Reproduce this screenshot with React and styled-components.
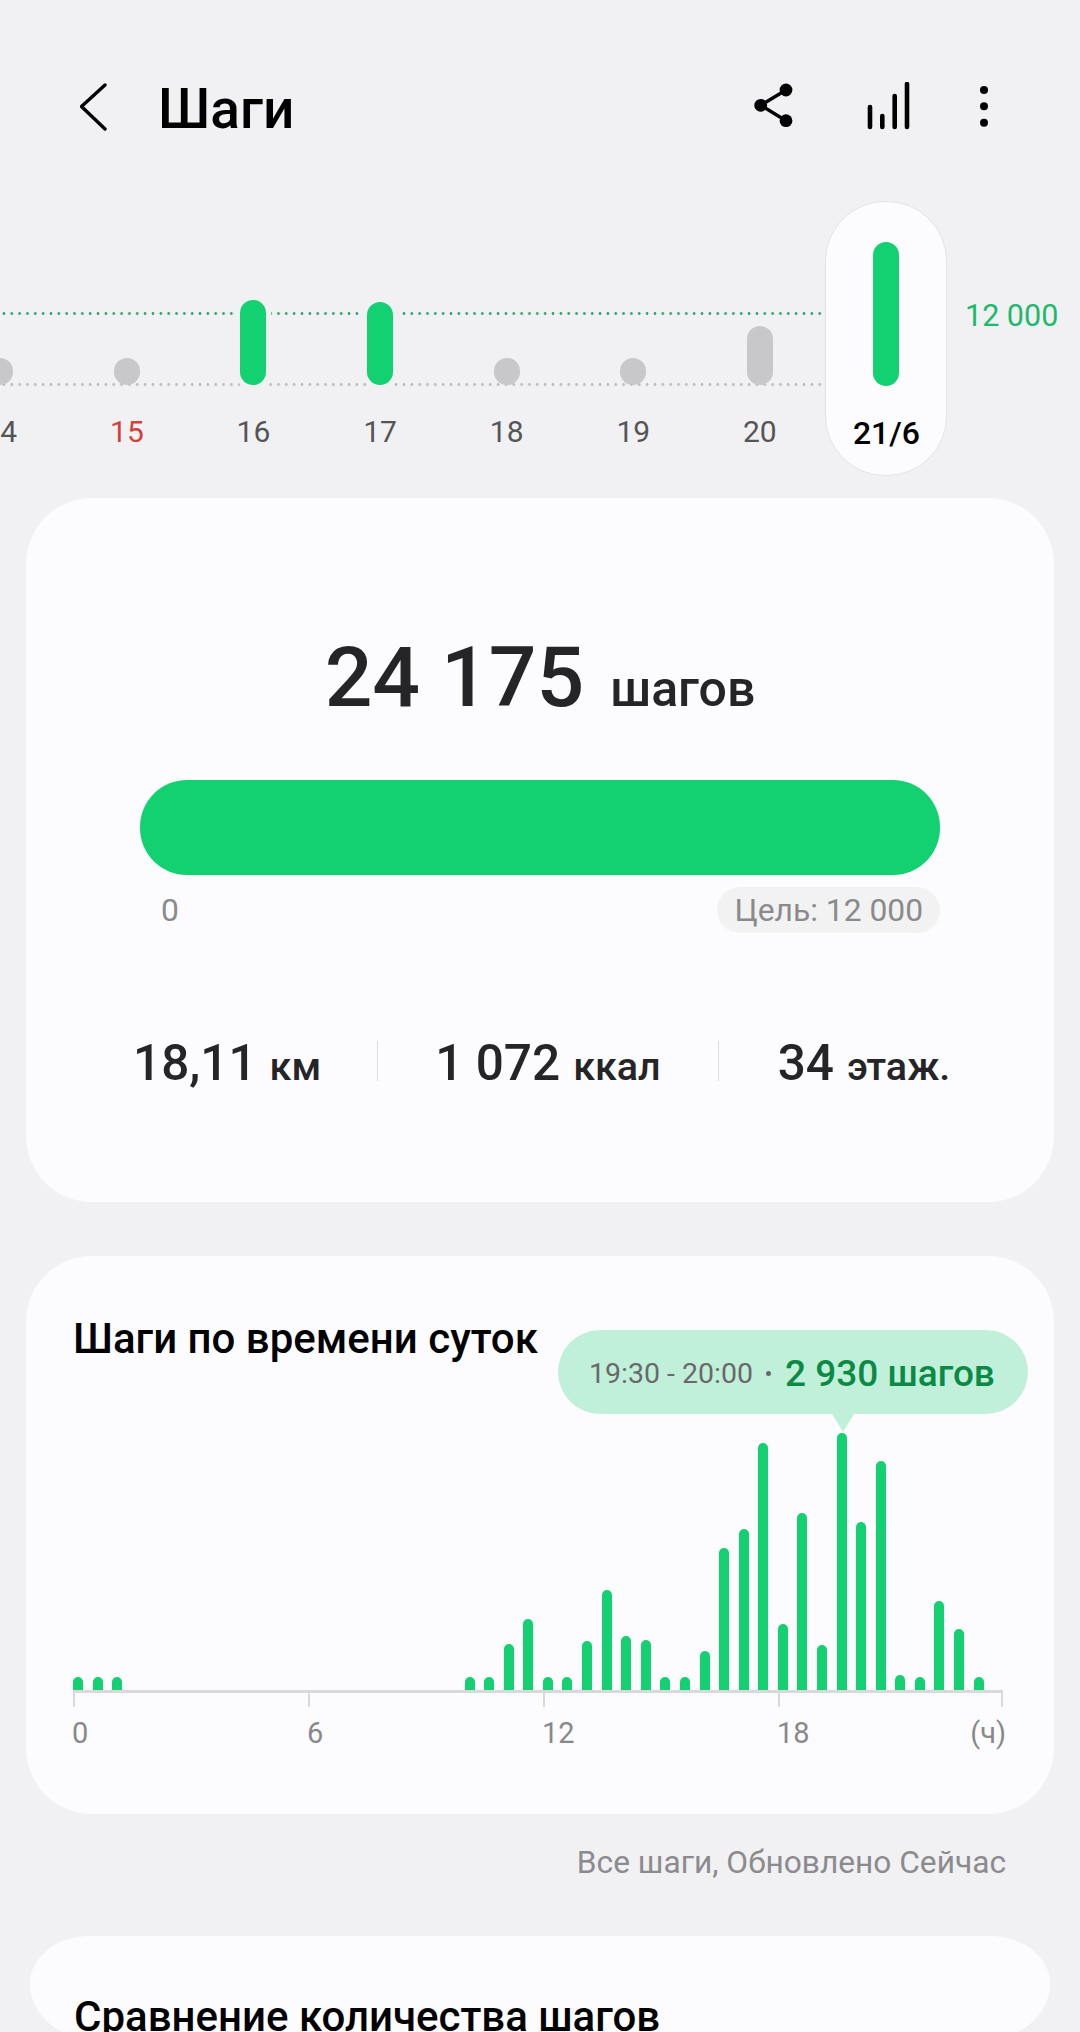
import * as React from 'react';
import styled, {createGlobalStyle} from 'styled-components';

const bgColor = '#f1f1f3';
const cardColor = '#fcfcfe';
const green = '#13d171';

const Global = createGlobalStyle`
  html, body {
    margin:0;
    padding:0;
    background:${bgColor};
    font-family:Roboto, "Noto Sans", sans-serif;
  }
  * { box-sizing:border-box; }
`

const Page = styled.div`
  width:1080px;
  height:2032px;
  overflow:hidden;
  background:${bgColor};
`

const Header = styled.header`
  display:flex;
  align-items:flex-start;
  height:201px;
  padding:82px 90px 0 80px;
`

const Title = styled.h1`
  margin:2px 0 0 48px;
  font-size:55px;
  font-weight:500;
  line-height:50px;
  color:#000;
`

const Actions = styled.div`
  display:flex;
  gap:68px;
  margin-left:auto;
`

const Strip = styled.div`
  position:relative;
  height:275px;
  overflow:hidden;
`

const DottedLine = styled.div`
  position:absolute;
  left:0;
  top:${p => p.$top}px;
  width:822px;
  height:3px;
  background:radial-gradient(circle at center, ${p => p.$color} 1.2px, transparent 1.7px) 0 0 / 7.85px 3px repeat-x;
`

const Days = styled.div`
  position:relative;
  display:flex;
  margin-left:-63px;
`

const Day = styled.div`
  display:flex;
  flex-direction:column;
  align-items:center;
  flex:none;
  width:126.6px;
  height:275px;
`

const SelectedPill = styled.div`
  display:flex;
  flex-direction:column;
  align-items:center;
  flex:none;
  width:122px;
  height:275px;
  border:1px solid #e4e4e6;
  border-radius:60px;
  background:${cardColor};
`

const BarSlot = styled.div`
  display:flex;
  align-items:flex-end;
  flex:none;
  height:184px;
`

const DayBar = styled.div`
  width:26px;
  height:${p => p.$h}px;
  border-radius:13px;
  background:${p => p.$color};
  box-shadow:${p => p.$ring ? `0 0 0 5px ${bgColor}` : 'none'};
`

const DayLabel = styled.div`
  margin-top:29px;
  font-size:${p => p.$active ? 32 : 30}px;
  line-height:36px;
  font-weight:${p => p.$active ? 500 : 400};
  color:${p => p.$color || '#555558'};
`

const GoalValue = styled.div`
  position:absolute;
  left:965px;
  top:97px;
  font-size:30.5px;
  line-height:36px;
  color:#1cba6b;
`

const Card = styled.section`
  margin:${p => p.$top}px 26px 0;
  height:${p => p.$height}px;
  border-radius:66px;
  background:${cardColor};
`

const SummaryCard = styled(Card)`
  padding:135px 114px 0;
`

const Total = styled.div`
  display:flex;
  justify-content:center;
  align-items:baseline;
  gap:26px;
  height:90px;
  line-height:90px;
  color:#252528;
  font-weight:500;
`

const TotalValue = styled.span`
  font-size:84px;
`

const TotalUnit = styled.span`
  font-size:50px;
`

const Progress = styled.div`
  height:95px;
  margin-top:57px;
  border-radius:47px;
  background:${green};
`

const ProgressScale = styled.div`
  display:flex;
  justify-content:space-between;
  align-items:center;
  margin-top:12px;
  padding-left:21px;
  color:#8a8a8c;
  font-size:31.8px;
`

const Goal = styled.div`
  padding:0 17px;
  height:46px;
  line-height:46px;
  border-radius:23px;
  background:#f2f2f3;
`

const Stats = styled.div`
  display:grid;
  grid-template-columns:244px 341px 291px;
  margin:108px 0 0 -7px;
  height:42px;
  color:#252528;
  font-weight:500;
`

const Stat = styled.div`
  display:flex;
  justify-content:${p => p.$first ? 'flex-start' : 'center'};
  align-items:baseline;
  gap:13px;
  border-left:${p => p.$first ? 'none' : '1px solid #dcdcde'};
  height:40px;
  line-height:44px;
  white-space:nowrap;
`

const StatValue = styled.span`
  font-size:49.5px;
`

const StatUnit = styled.span`
  font-size:39.5px;
`

const ChartCard = styled(Card)`
  position:relative;
  padding:60px 0 0 47px;
`

const ChartTitle = styled.h2`
  margin:0;
  font-size:42px;
  line-height:46px;
  font-weight:500;
  color:#000;
  white-space:nowrap;
`

const Tooltip = styled.div`
  position:absolute;
  left:532px;
  top:74px;
  display:flex;
  align-items:center;
  width:470px;
  height:84px;
  padding:2px 0 0 31px;
  border-radius:42px;
  background:#c0f0da;
  white-space:nowrap;
  &::after {
    content:'';
    position:absolute;
    left:274px;
    top:84px;
    border-left:11px solid transparent;
    border-right:11px solid transparent;
    border-top:18px solid #c0f0da;
  }
`

const TooltipTime = styled.span`
  font-size:28.5px;
  color:#69696b;
`

const TooltipDot = styled.span`
  width:5px;
  height:5px;
  margin:0 14px 0 13px;
  border-radius:50%;
  background:#69696b;
`

const TooltipValue = styled.span`
  font-size:37px;
  font-weight:500;
  color:#0b8a46;
`

const Bars = styled.div`
  display:grid;
  grid-template-columns:repeat(48, 19.58px);
  align-items:end;
  height:290px;
  margin-top:38px;
  width:930px;
`

const Bar = styled.div`
  justify-self:start;
  width:10px;
  border-radius:5px 5px 0 0;
  background:${green};
`

const Axis = styled.div`
  display:grid;
  grid-template-columns:235px 235px 235px 225px;
  width:930px;
  border-top:3px solid #d9d9db;
`

const Tick = styled.div`
  height:14px;
  border-left:2px solid #d9d9db;
  border-right:${p => p.$last ? '2px solid #d9d9db' : 'none'};
`

const AxisLabels = styled.div`
  display:grid;
  grid-template-columns:235px 235px 235px 229px;
  width:934px;
  margin:8px 0 0 -1px;
  color:#88888a;
  font-size:29px;
  line-height:36px;
`

const AxisLabel = styled.div`
  display:flex;
  justify-content:space-between;
`

const Updated = styled.div`
  margin:31px 74px 0 0;
  text-align:right;
  font-size:31.7px;
  line-height:36px;
  color:#8b8b8d;
`

const CompareCard = styled.section`
  margin:55px 30px 0;
  height:105px;
  padding:58px 0 0 44px;
  overflow:hidden;
  border-radius:60px 60px 70px 70px / 47px 47px 57px 57px;
  background:${cardColor};
`

const days = [
  {label:'14', h:27, color:'#c8c8ca'},
  {label:'15', h:27, color:'#c8c8ca', labelColor:'#d1403c'},
  {label:'16', h:85, color:green, ring:true},
  {label:'17', h:83, color:green, ring:true},
  {label:'18', h:27, color:'#c8c8ca'},
  {label:'19', h:27, color:'#c8c8ca'},
  {label:'20', h:59, color:'#c8c8ca'},
];

// bar heights for each half hour, 0 is empty
const halfHours = [
  13, 13, 13, 0, 0, 0, 0, 0, 0, 0, 0, 0, 0, 0, 0, 0, 0, 0, 0, 0,
  13, 13, 46, 71, 13, 13, 49, 100, 54, 50, 13, 13, 39, 142, 161, 247, 66, 177,
  45, 257, 168, 229, 15, 13, 89, 61, 13, 0,
];

const BackIcon = () => (
  <svg width="30" height="50" viewBox="0 0 30 50" fill="none" stroke="#000" strokeWidth="3.4" strokeLinecap="round" strokeLinejoin="round">
    <path d="M25 3 L1.5 24.5 L25 47" />
  </svg>
);

const ShareIcon = () => (
  <svg width="44" height="50" viewBox="0 0 44 50">
    <path d="M32 8 L6.7 23.3 L32 38.7" fill="none" stroke="#000" strokeWidth="3.4" />
    <circle cx="32" cy="8" r="6.4" />
    <circle cx="6.7" cy="23.3" r="6.4" />
    <circle cx="32" cy="38.7" r="6.4" />
  </svg>
);

const StatsIcon = () => (
  <svg width="44" height="50" viewBox="0 0 44 50" fill="none" stroke="#000" strokeWidth="4.6" strokeLinecap="round">
    <path d="M4 25 V45 M16.3 34 V45 M28.7 14 V45 M41 2 V45" />
  </svg>
);

const MoreIcon = () => (
  <svg width="12" height="50" viewBox="0 0 12 50">
    <circle cx="6" cy="8" r="4" />
    <circle cx="6" cy="24.3" r="4" />
    <circle cx="6" cy="40.7" r="4" />
  </svg>
);

export default function App() {
  return (
    <Page>
      <Global />
      <Header>
        <BackIcon />
        <Title>Шаги</Title>
        <Actions>
          <ShareIcon />
          <StatsIcon />
          <MoreIcon />
        </Actions>
      </Header>

      <Strip>
        <DottedLine $top={111} $color="#3aa877" />
        <DottedLine $top={182} $color="#bdbdbf" />
        <Days>
          {days.map(d => (
            <Day key={d.label}>
              <BarSlot>
                <DayBar $h={d.h} $color={d.color} $ring={d.ring} />
              </BarSlot>
              <DayLabel $color={d.labelColor}>{d.label}</DayLabel>
            </Day>
          ))}
          <Day>
            <SelectedPill>
              <BarSlot>
                <DayBar $h={144} $color={green} />
              </BarSlot>
              <DayLabel $active $color="#000">21/6</DayLabel>
            </SelectedPill>
          </Day>
        </Days>
        <GoalValue>12 000</GoalValue>
      </Strip>

      <SummaryCard $top={22} $height={704}>
        <Total>
          <TotalValue>24 175</TotalValue>
          <TotalUnit>шагов</TotalUnit>
        </Total>
        <Progress />
        <ProgressScale>
          <span>0</span>
          <Goal>Цель: 12 000</Goal>
        </ProgressScale>
        <Stats>
          <Stat $first><StatValue>18,11</StatValue><StatUnit>км</StatUnit></Stat>
          <Stat><StatValue>1 072</StatValue><StatUnit>ккал</StatUnit></Stat>
          <Stat><StatValue>34</StatValue><StatUnit>этаж.</StatUnit></Stat>
        </Stats>
      </SummaryCard>

      <ChartCard $top={54} $height={558}>
        <ChartTitle>Шаги по времени суток</ChartTitle>
        <Tooltip>
          <TooltipTime>19:30 - 20:00</TooltipTime>
          <TooltipDot />
          <TooltipValue>2 930 шагов</TooltipValue>
        </Tooltip>
        <Bars>
          {halfHours.map((h, i) => <Bar key={i} style={{height:h}} />)}
        </Bars>
        <Axis>
          <Tick />
          <Tick />
          <Tick />
          <Tick $last />
        </Axis>
        <AxisLabels>
          <AxisLabel>0</AxisLabel>
          <AxisLabel>6</AxisLabel>
          <AxisLabel>12</AxisLabel>
          <AxisLabel><span>18</span><span>(ч)</span></AxisLabel>
        </AxisLabels>
      </ChartCard>

      <Updated>Все шаги, Обновлено Сейчас</Updated>

      <CompareCard>
        <ChartTitle>Сравнение количества шагов</ChartTitle>
      </CompareCard>
    </Page>
  );
}
